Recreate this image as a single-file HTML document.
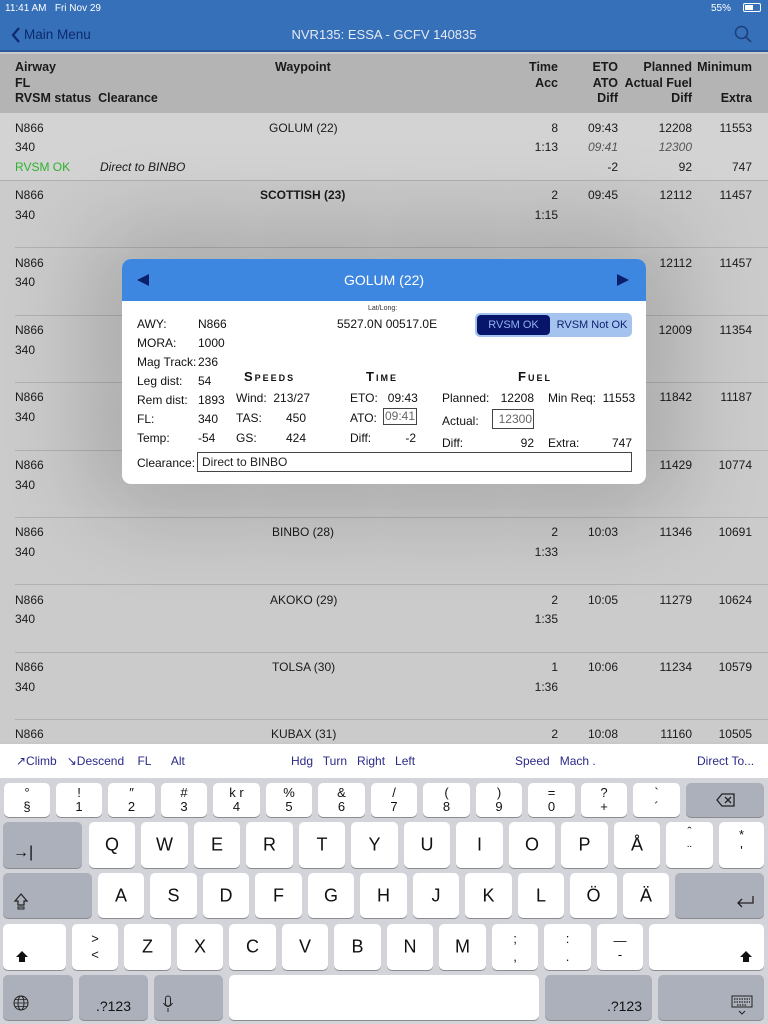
<!DOCTYPE html>
<html><head><meta charset="utf-8"><style>
*{margin:0;padding:0;box-sizing:border-box}
body{width:768px;height:1024px;overflow:hidden;position:relative;background:#cbcbcb;font-family:"Liberation Sans",sans-serif;font-size:12px;color:#1a1a1a}
.a{position:absolute;white-space:nowrap}
.r{text-align:right}
#top{position:absolute;left:0;top:0;width:768px;height:52px;background:#3570b9;border-bottom:2px solid #2a5a9a}
#hdr{position:absolute;left:0;top:54px;width:768px;height:59px;background:#b4b4b4;font-weight:bold;font-size:12.5px}
.sep{position:absolute;left:15px;right:0;height:1px;background:#b0b0b0}
#modal{position:absolute;left:122px;top:259px;width:524px;height:225px;background:#fff;border-radius:9px;overflow:hidden;box-shadow:0 0 90px 30px rgba(0,0,0,0.18)}
#mh{position:absolute;left:0;top:0;width:524px;height:42px;background:#3e87e0;color:#fff;font-size:14px;text-align:center;line-height:42px}
.m{position:absolute;white-space:nowrap;font-size:12px;color:#111}
.cap{font-family:"Liberation Sans",sans-serif;font-weight:bold;font-variant:small-caps;letter-spacing:2px;font-size:13px}
#tb{position:absolute;left:0;top:742px;width:768px;height:36px;background:#fff;border-top:2px solid #c8c8c8;color:#2a2a88;font-size:12px}
#kb{position:absolute;left:0;top:778px;width:768px;height:246px;background:#d2d4da}
.k{position:absolute;background:#fff;border-radius:5px;box-shadow:0 1px 0 #8a8c90;text-align:center;color:#111}
.g{background:#abb0ba}
.k .t{position:absolute;left:0;right:0;top:3px;font-size:13px;line-height:14px}
.k .b{position:absolute;left:0;right:0;bottom:3px;font-size:13px;line-height:14px}
.k .c{position:absolute;left:0;right:0;top:50%;transform:translateY(-50%);font-size:18px}
</style></head><body>
<div id="top">
 <div class="a" style="left:5px;top:3px;color:#fff;font-size:10px">11:41 AM&nbsp;&nbsp; Fri Nov 29</div>
 <div class="a" style="left:711px;top:3px;color:#fff;font-size:10px">55%</div>
 <div class="a" style="left:743px;top:3px;width:18px;height:9px;border:1px solid #fff;border-radius:2px"><div style="width:8px;height:5px;margin:1px;background:#fff"></div></div>
 <svg class="a" style="left:10px;top:26px" width="12" height="18"><path d="M9 2 L3 9 L9 16" stroke="#0d2a6e" stroke-width="2.2" fill="none"/></svg>
 <div class="a" style="left:24px;top:27px;color:#0d2a6e;font-size:13.5px">Main Menu</div>
 <div class="a" style="left:0;width:768px;text-align:center;top:27px;color:#e6eaf3;font-size:13px">NVR135: ESSA - GCFV 140835</div>
 <svg class="a" style="left:734px;top:25px" width="18" height="18"><circle cx="7.5" cy="7.5" r="6" stroke="#1e3e78" stroke-width="1.5" fill="none"/><path d="M12 12 L17 17" stroke="#1e3e78" stroke-width="1.6"/></svg>
</div>
<div id="hdr">
 <div class="a" style="left:15px;top:6px">Airway</div><div class="a" style="left:15px;top:22px">FL</div><div class="a" style="left:15px;top:37px">RVSM status&nbsp;&nbsp;Clearance</div>
 <div class="a" style="left:275px;top:6px">Waypoint</div>
 <div class="a r" style="right:210px;top:6px">Time</div><div class="a r" style="right:210px;top:22px">Acc</div>
 <div class="a r" style="right:150px;top:6px">ETO</div><div class="a r" style="right:150px;top:22px">ATO</div><div class="a r" style="right:150px;top:37px">Diff</div>
 <div class="a r" style="right:76px;top:6px">Planned</div><div class="a r" style="right:76px;top:22px">Actual Fuel</div><div class="a r" style="right:76px;top:37px">Diff</div>
 <div class="a r" style="right:16px;top:6px">Minimum</div><div class="a r" style="right:16px;top:37px">Extra</div>
</div>
<div style="position:absolute;left:0;top:113px;width:768px;height:67px;background:#d3d3d3"></div>
<div class="a" style="left:15px;top:121px">N866</div><div class="a" style="left:15px;top:140px">340</div><div class="a" style="left:15px;top:160px;color:#2db22d">RVSM OK</div><div class="a" style="left:100px;top:160px;font-style:italic">Direct to BINBO</div>
<div class="a" style="left:269px;top:121px">GOLUM (22)</div>
<div class="a r" style="right:210px;top:121px">8</div><div class="a r" style="right:210px;top:140px">1:13</div>
<div class="a r" style="right:150px;top:121px">09:43</div><div class="a r" style="right:150px;top:140px;font-style:italic;color:#555">09:41</div><div class="a r" style="right:150px;top:160px">-2</div>
<div class="a r" style="right:76px;top:121px">12208</div><div class="a r" style="right:76px;top:140px;font-style:italic;color:#555">12300</div><div class="a r" style="right:76px;top:160px">92</div>
<div class="a r" style="right:16px;top:121px">11553</div><div class="a r" style="right:16px;top:160px">747</div>
<div class="sep" style="top:180px;left:0"></div>
<div class="a" style="left:15px;top:188px">N866</div><div class="a" style="left:15px;top:208px">340</div><div class="a" style="left:260px;top:188px;font-weight:bold">SCOTTISH (23)</div><div class="a r" style="right:210px;top:188px">2</div><div class="a r" style="right:210px;top:208px">1:15</div><div class="a r" style="right:150px;top:188px">09:45</div><div class="a r" style="right:76px;top:188px">12112</div><div class="a r" style="right:16px;top:188px">11457</div>
<div class="sep" style="top:247px"></div>
<div class="a" style="left:15px;top:256px">N866</div><div class="a" style="left:15px;top:275px">340</div><div class="a r" style="right:76px;top:256px">12112</div><div class="a r" style="right:16px;top:256px">11457</div>
<div class="sep" style="top:315px"></div>
<div class="a" style="left:15px;top:323px">N866</div><div class="a" style="left:15px;top:343px">340</div><div class="a r" style="right:76px;top:323px">12009</div><div class="a r" style="right:16px;top:323px">11354</div>
<div class="sep" style="top:382px"></div>
<div class="a" style="left:15px;top:390px">N866</div><div class="a" style="left:15px;top:410px">340</div><div class="a r" style="right:76px;top:390px">11842</div><div class="a r" style="right:16px;top:390px">11187</div>
<div class="sep" style="top:450px"></div>
<div class="a" style="left:15px;top:458px">N866</div><div class="a" style="left:15px;top:478px">340</div><div class="a r" style="right:76px;top:458px">11429</div><div class="a r" style="right:16px;top:458px">10774</div>
<div class="sep" style="top:517px"></div>
<div class="a" style="left:15px;top:525px">N866</div><div class="a" style="left:15px;top:545px">340</div><div class="a" style="left:272px;top:525px">BINBO (28)</div><div class="a r" style="right:210px;top:525px">2</div><div class="a r" style="right:210px;top:545px">1:33</div><div class="a r" style="right:150px;top:525px">10:03</div><div class="a r" style="right:76px;top:525px">11346</div><div class="a r" style="right:16px;top:525px">10691</div>
<div class="sep" style="top:584px"></div>
<div class="a" style="left:15px;top:593px">N866</div><div class="a" style="left:15px;top:612px">340</div><div class="a" style="left:270px;top:593px">AKOKO (29)</div><div class="a r" style="right:210px;top:593px">2</div><div class="a r" style="right:210px;top:612px">1:35</div><div class="a r" style="right:150px;top:593px">10:05</div><div class="a r" style="right:76px;top:593px">11279</div><div class="a r" style="right:16px;top:593px">10624</div>
<div class="sep" style="top:652px"></div>
<div class="a" style="left:15px;top:660px">N866</div><div class="a" style="left:15px;top:680px">340</div><div class="a" style="left:272px;top:660px">TOLSA (30)</div><div class="a r" style="right:210px;top:660px">1</div><div class="a r" style="right:210px;top:680px">1:36</div><div class="a r" style="right:150px;top:660px">10:06</div><div class="a r" style="right:76px;top:660px">11234</div><div class="a r" style="right:16px;top:660px">10579</div>
<div class="sep" style="top:719px"></div>
<div class="a" style="left:15px;top:727px">N866</div><div class="a" style="left:271px;top:727px">KUBAX (31)</div><div class="a r" style="right:210px;top:727px">2</div><div class="a r" style="right:150px;top:727px">10:08</div><div class="a r" style="right:76px;top:727px">11160</div><div class="a r" style="right:16px;top:727px">10505</div>

<div id="modal">
 <div id="mh">GOLUM (22)
  <svg style="position:absolute;left:14px;top:14px" width="14" height="14"><path d="M1 7 L13 1 L13 13Z" fill="#0b1f6e"/></svg>
  <svg style="position:absolute;right:16px;top:14px" width="14" height="14"><path d="M13 7 L1 1 L1 13Z" fill="#0b1f6e"/></svg>
 </div>
 <div class="m" style="left:246px;top:46px;font-size:7px;color:#333">Lat/Long:</div>
 <div class="m" style="left:215px;top:58px">5527.0N 00517.0E</div>
 <div class="m" style="left:353px;top:54px;width:157px;height:24px;background:#a4c4ef;border-radius:5px">
  <div style="position:absolute;left:2px;top:2px;width:73px;height:20px;background:#08156a;border-radius:4px;color:#8fb2f0;font-size:11px;text-align:center;line-height:20px">RVSM OK</div>
  <div style="position:absolute;left:78px;top:2px;width:78px;height:20px;color:#0d1f6e;font-size:11px;text-align:center;line-height:20px">RVSM Not OK</div>
 </div>
 <div class="m" style="left:15px;top:58px">AWY:</div><div class="m" style="left:76px;top:58px">N866</div>
 <div class="m" style="left:15px;top:77px">MORA:</div><div class="m" style="left:76px;top:77px">1000</div>
 <div class="m" style="left:15px;top:96px">Mag Track:</div><div class="m" style="left:76px;top:96px">236</div>
 <div class="m" style="left:15px;top:115px">Leg dist:</div><div class="m" style="left:76px;top:115px">54</div>
 <div class="m" style="left:15px;top:134px">Rem dist:</div><div class="m" style="left:76px;top:134px">1893</div>
 <div class="m" style="left:15px;top:153px">FL:</div><div class="m" style="left:76px;top:153px">340</div>
 <div class="m" style="left:15px;top:172px">Temp:</div><div class="m" style="left:76px;top:172px">-54</div>
 <div class="m cap" style="left:122px;top:110px">Speeds</div>
 <div class="m" style="left:114px;top:132px">Wind:&nbsp; 213/27</div>
 <div class="m" style="left:114px;top:152px">TAS:</div><div class="m r" style="right:340px;top:152px">450</div>
 <div class="m" style="left:114px;top:172px">GS:</div><div class="m r" style="right:340px;top:172px">424</div>
 <div class="m cap" style="left:244px;top:110px">Time</div>
 <div class="m" style="left:228px;top:132px">ETO:&nbsp;&nbsp; 09:43</div>
 <div class="m" style="left:228px;top:152px">ATO:</div><div class="m" style="left:261px;top:149px;width:34px;height:17px;border:1px solid #444;color:#666;text-align:center;line-height:15px">09:41</div>
 <div class="m" style="left:228px;top:172px">Diff:</div><div class="m r" style="right:230px;top:172px">-2</div>
 <div class="m cap" style="left:396px;top:110px">Fuel</div>
 <div class="m" style="left:320px;top:132px">Planned:</div><div class="m r" style="right:112px;top:132px">12208</div>
 <div class="m" style="left:426px;top:132px">Min Req:&nbsp; 11553</div>
 <div class="m" style="left:320px;top:155px">Actual:</div><div class="m" style="left:370px;top:150px;width:42px;height:20px;border:1px solid #444;color:#666;text-align:right;padding-right:1px;line-height:18px">12300</div>
 <div class="m" style="left:320px;top:177px">Diff:</div><div class="m r" style="right:112px;top:177px">92</div>
 <div class="m" style="left:426px;top:177px">Extra:</div><div class="m r" style="right:14px;top:177px">747</div>
 <div class="m" style="left:15px;top:197px">Clearance:</div>
 <div class="m" style="left:75px;top:193px;width:435px;height:20px;border:1px solid #444;padding-left:4px;line-height:18px;color:#222">Direct to BINBO</div>
</div>

<div id="tb">
 <div class="a" style="left:16px;top:10px">↗Climb&nbsp;&nbsp; ↘Descend&nbsp;&nbsp;&nbsp; FL&nbsp;&nbsp;&nbsp;&nbsp;&nbsp; Alt</div>
 <div class="a" style="left:291px;top:10px">Hdg&nbsp;&nbsp; Turn&nbsp;&nbsp; Right&nbsp;&nbsp; Left</div>
 <div class="a" style="left:515px;top:10px">Speed&nbsp;&nbsp; Mach .</div>
 <div class="a" style="left:697px;top:10px">Direct To...</div>
</div>
<div id="kb">
<div class="k" style="left:4px;top:5px;width:46px;height:34px"><div class="t">°</div><div class="b">§</div></div>
<div class="k" style="left:56px;top:5px;width:46px;height:34px"><div class="t">!</div><div class="b">1</div></div>
<div class="k" style="left:108px;top:5px;width:47px;height:34px"><div class="t">″</div><div class="b">2</div></div>
<div class="k" style="left:161px;top:5px;width:46px;height:34px"><div class="t">#</div><div class="b">3</div></div>
<div class="k" style="left:213px;top:5px;width:47px;height:34px"><div class="t">k r</div><div class="b">4</div></div>
<div class="k" style="left:266px;top:5px;width:46px;height:34px"><div class="t">%</div><div class="b">5</div></div>
<div class="k" style="left:318px;top:5px;width:47px;height:34px"><div class="t">&amp;</div><div class="b">6</div></div>
<div class="k" style="left:371px;top:5px;width:46px;height:34px"><div class="t">/</div><div class="b">7</div></div>
<div class="k" style="left:423px;top:5px;width:47px;height:34px"><div class="t">(</div><div class="b">8</div></div>
<div class="k" style="left:476px;top:5px;width:46px;height:34px"><div class="t">)</div><div class="b">9</div></div>
<div class="k" style="left:528px;top:5px;width:47px;height:34px"><div class="t">=</div><div class="b">0</div></div>
<div class="k" style="left:581px;top:5px;width:46px;height:34px"><div class="t">?</div><div class="b">+</div></div>
<div class="k" style="left:633px;top:5px;width:47px;height:34px"><div class="t">`</div><div class="b">´</div></div>
<div class="k g" style="left:686px;top:5px;width:78px;height:34px"><svg style="position:absolute;left:30px;top:10px" width="20" height="14"><path d="M6 1 H18 V13 H6 L1 7Z" fill="none" stroke="#222" stroke-width="1.3"/><path d="M9 4 L15 10 M15 4 L9 10" stroke="#222" stroke-width="1.3"/></svg></div>
<div class="k g" style="left:3px;top:44px;width:79px;height:46px"><div class="a" style="left:10px;top:22px;font-size:16px">→|</div></div>
<div class="k" style="left:89px;top:44px;width:46px;height:46px"><div class="c">Q</div></div>
<div class="k" style="left:141px;top:44px;width:47px;height:46px"><div class="c">W</div></div>
<div class="k" style="left:194px;top:44px;width:46px;height:46px"><div class="c">E</div></div>
<div class="k" style="left:246px;top:44px;width:47px;height:46px"><div class="c">R</div></div>
<div class="k" style="left:299px;top:44px;width:46px;height:46px"><div class="c">T</div></div>
<div class="k" style="left:351px;top:44px;width:47px;height:46px"><div class="c">Y</div></div>
<div class="k" style="left:404px;top:44px;width:46px;height:46px"><div class="c">U</div></div>
<div class="k" style="left:456px;top:44px;width:47px;height:46px"><div class="c">I</div></div>
<div class="k" style="left:509px;top:44px;width:46px;height:46px"><div class="c">O</div></div>
<div class="k" style="left:561px;top:44px;width:47px;height:46px"><div class="c">P</div></div>
<div class="k" style="left:614px;top:44px;width:46px;height:46px"><div class="c">Å</div></div>
<div class="k" style="left:666px;top:44px;width:47px;height:46px"><div class="t">ˆ</div><div class="b" style="bottom:10px">¨</div></div>
<div class="k" style="left:719px;top:44px;width:45px;height:46px"><div class="t" style="top:6px">*</div><div class="b" style="bottom:10px">'</div></div>
<div class="k g" style="left:3px;top:95px;width:89px;height:45px"><svg style="position:absolute;left:10px;top:20px" width="16" height="18"><path d="M8 1 L14 8 H11 V12 H5 V8 H2Z" fill="none" stroke="#222" stroke-width="1.2"/><rect x="5" y="14" width="6" height="2" fill="none" stroke="#222"/></svg></div>
<div class="k" style="left:98px;top:95px;width:46px;height:45px"><div class="c">A</div></div>
<div class="k" style="left:150px;top:95px;width:47px;height:45px"><div class="c">S</div></div>
<div class="k" style="left:203px;top:95px;width:46px;height:45px"><div class="c">D</div></div>
<div class="k" style="left:255px;top:95px;width:47px;height:45px"><div class="c">F</div></div>
<div class="k" style="left:308px;top:95px;width:46px;height:45px"><div class="c">G</div></div>
<div class="k" style="left:360px;top:95px;width:47px;height:45px"><div class="c">H</div></div>
<div class="k" style="left:413px;top:95px;width:46px;height:45px"><div class="c">J</div></div>
<div class="k" style="left:465px;top:95px;width:47px;height:45px"><div class="c">K</div></div>
<div class="k" style="left:518px;top:95px;width:46px;height:45px"><div class="c">L</div></div>
<div class="k" style="left:570px;top:95px;width:47px;height:45px"><div class="c">Ö</div></div>
<div class="k" style="left:623px;top:95px;width:46px;height:45px"><div class="c">Ä</div></div>
<div class="k g" style="left:675px;top:95px;width:89px;height:45px"><svg style="position:absolute;left:60px;top:22px" width="20" height="14"><path d="M18 1 V8 H3 M7 4 L3 8 L7 12" fill="none" stroke="#222" stroke-width="1.3"/></svg></div>
<div class="k" style="left:3px;top:146px;width:63px;height:46px"><svg style="position:absolute;left:12px;top:26px" width="14" height="14"><path d="M7 1 L13 7 H10 V12 H4 V7 H1Z" fill="#111"/></svg></div>
<div class="k" style="left:72px;top:146px;width:46px;height:46px"><div class="t" style="top:8px">&gt;</div><div class="b" style="bottom:8px">&lt;</div></div>
<div class="k" style="left:124px;top:146px;width:47px;height:46px"><div class="c">Z</div></div>
<div class="k" style="left:177px;top:146px;width:46px;height:46px"><div class="c">X</div></div>
<div class="k" style="left:229px;top:146px;width:47px;height:46px"><div class="c">C</div></div>
<div class="k" style="left:282px;top:146px;width:46px;height:46px"><div class="c">V</div></div>
<div class="k" style="left:334px;top:146px;width:47px;height:46px"><div class="c">B</div></div>
<div class="k" style="left:387px;top:146px;width:46px;height:46px"><div class="c">N</div></div>
<div class="k" style="left:439px;top:146px;width:47px;height:46px"><div class="c">M</div></div>
<div class="k" style="left:492px;top:146px;width:46px;height:46px"><div class="t" style="top:8px">;</div><div class="b" style="bottom:6px">,</div></div>
<div class="k" style="left:544px;top:146px;width:47px;height:46px"><div class="t" style="top:8px">:</div><div class="b" style="bottom:6px">.</div></div>
<div class="k" style="left:597px;top:146px;width:46px;height:46px"><div class="t" style="top:10px">—</div><div class="b" style="bottom:8px">-</div></div>
<div class="k" style="left:649px;top:146px;width:115px;height:46px"><svg style="position:absolute;left:90px;top:26px" width="14" height="14"><path d="M7 1 L13 7 H10 V12 H4 V7 H1Z" fill="#111"/></svg></div>
<div class="k g" style="left:3px;top:197px;width:70px;height:45px"><svg style="position:absolute;left:10px;top:20px" width="16" height="16"><circle cx="8" cy="8" r="7" fill="none" stroke="#222"/><ellipse cx="8" cy="8" rx="3" ry="7" fill="none" stroke="#222"/><path d="M1 8 H15 M2 4.5 H14 M2 11.5 H14" stroke="#222" stroke-width=".8"/></svg></div>
<div class="k g" style="left:79px;top:197px;width:69px;height:45px"><div class="b" style="bottom:7px;font-size:14px">.?123</div></div>
<div class="k g" style="left:154px;top:197px;width:69px;height:45px"><svg style="position:absolute;left:8px;top:20px" width="12" height="18"><rect x="3.5" y="1" width="5" height="10" rx="2.5" fill="none" stroke="#222"/><path d="M1.5 8 Q6 15 10.5 8 M6 13 V17" fill="none" stroke="#222"/></svg></div>
<div class="k" style="left:229px;top:197px;width:310px;height:45px"></div>
<div class="k g" style="left:545px;top:197px;width:107px;height:45px"><div class="b" style="bottom:7px;font-size:14px;text-align:right;padding-right:10px">.?123</div></div>
<div class="k g" style="left:658px;top:197px;width:106px;height:45px"><svg style="position:absolute;left:73px;top:20px" width="22" height="22"><rect x="1" y="1" width="20" height="11" fill="none" stroke="#222"/><path d="M3 4 H19 M3 7 H19 M6 10 H16" stroke="#222" stroke-width="1.2" stroke-dasharray="1.5 1"/><path d="M8 16 L11 19 L14 16" fill="none" stroke="#222"/></svg></div>
</div>
</body></html>
